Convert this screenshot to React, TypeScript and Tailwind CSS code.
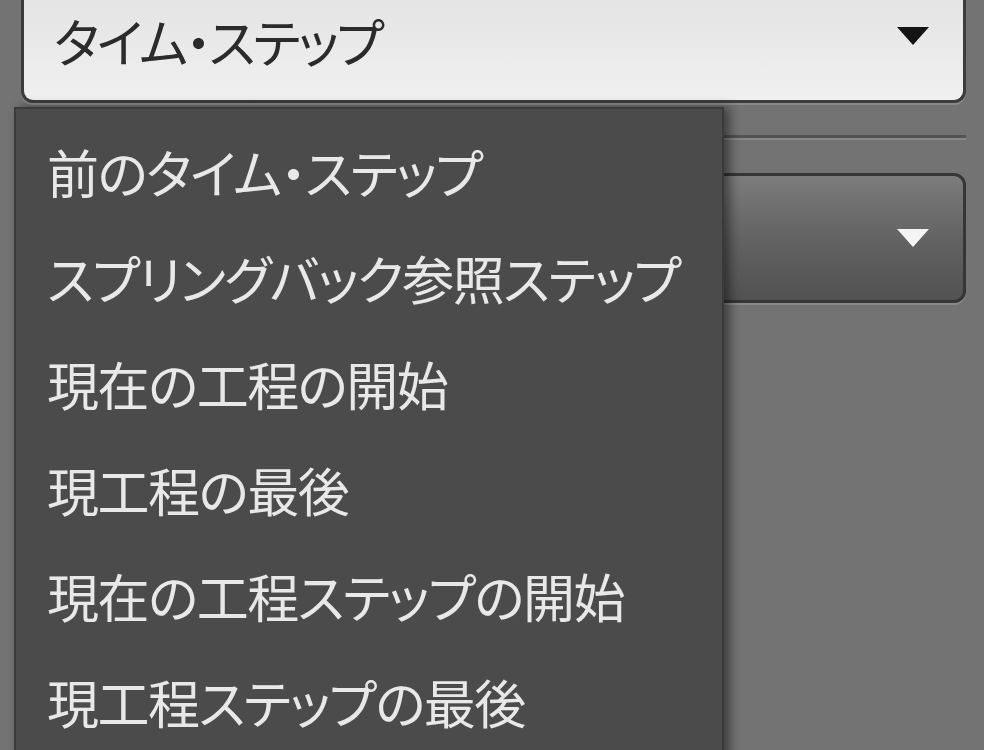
import React from 'react'

const items = [
  '前のタイム・ステップ',
  'スプリングバック参照ステップ',
  '現在の工程の開始',
  '現工程の最後',
  '現在の工程ステップの開始',
  '現工程ステップの最後',
]

function Arrow({ color }: { color: string }) {
  return (
    <svg width="36" height="22" viewBox="0 0 36 22">
      <path d="M2 2 L34 2 L18 20 Z" fill={color} />
    </svg>
  )
}

export default function App() {
  return (
    <div
      className="relative h-[750px] w-[984px] overflow-hidden bg-[#737373] [font-feature-settings:'palt']"
      style={{ fontFamily: '"Noto Sans CJK JP", "Noto Sans", sans-serif' }}
    >
      <div className="flex flex-col pl-[21px] pr-[18px]">
        {/* current value box */}
        <div className="-mt-[20px] flex h-[123px] items-end rounded-b-[12px] border-[3px] border-t-0 border-[#3c3c3c] bg-gradient-to-b from-[#e2e2e2] to-[#f0f0f0] pb-[33px] pl-[30px] pr-[32px] shadow-[0_2px_0_#8a8a8a]">
          <span className="flex-1 text-[52px] leading-none tracking-[-2.5px] text-[#2b2b2b]">タイム・ステップ</span>
          <div className="mb-[20px]">
            <Arrow color="#141414" />
          </div>
        </div>

        {/* separator */}
        <div className="mt-[32px] flex flex-col">
          <div className="h-[3px] bg-[#525252]" />
          <div className="h-[2px] bg-[#888888]" />
        </div>

        {/* second box */}
        <div className="mt-[33px] flex h-[130px] items-center justify-end rounded-[12px] border-[3px] border-[#363636] bg-gradient-to-b from-[#7c7c7c] via-[#636363] to-[#525252] pr-[32px] shadow-[0_2px_0_#8a8a8a]">
          <Arrow color="#f4f4f4" />
        </div>
      </div>

      {/* open menu */}
      <div className="absolute left-[14px] top-[107px] h-[700px] w-[710px] border-x-[2px] border-t-[2px] border-[#3a3a3a] bg-[#4b4b4b] pt-[10px] shadow-[6px_0_10px_rgba(0,0,0,0.45)]">
        {items.map((t) => (
          <div key={t} className="flex h-[106px] items-center pl-[31px] text-[52px] leading-none tracking-[-1.5px] text-[#e8e8e8]">
            {t}
          </div>
        ))}
      </div>
    </div>
  )
}
